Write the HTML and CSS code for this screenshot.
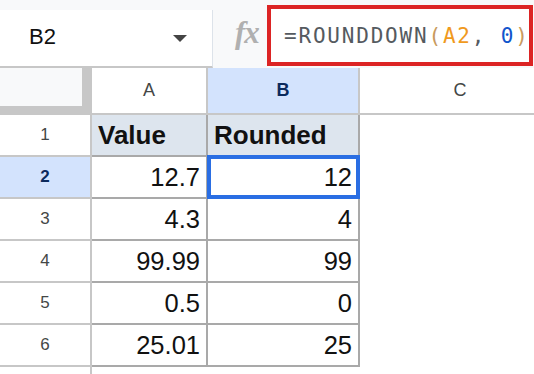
FILE: index.html
```html
<!DOCTYPE html>
<html lang="en">

<head>
    <meta charset="UTF-8">
    <meta name="viewport" content="width=device-width, initial-scale=1.0">
    <title>ROUNDDOWN - Sheet</title>
    <link rel="stylesheet" href="styles.css">
</head>

<body>

    <div class="sheet">
        <div class="toolbar">
            <div class="name-box">
                <span class="cell-ref">B2</span>
                <span class="caret"></span>
            </div>
            <div class="fx">fx</div>
            <div class="formula">
                <span class="fn">=ROUNDDOWN</span><span class="paren">(</span><span class="ref">A2</span><span class="fn">, </span><span class="num">0</span><span class="paren">)</span>
            </div>
        </div>

        <div class="grid">
            <div class="corner"><div class="corner-inner"></div></div>
            <div class="col-head">A</div>
            <div class="col-head active">B</div>
            <div class="col-head last">C</div>

            <div class="row-head">1</div>
            <div class="cell head-cell">Value</div>
            <div class="cell head-cell">Rounded</div>
            <div class="empty"></div>

            <div class="row-head active">2</div>
            <div class="cell num-cell">12.7</div>
            <div class="cell num-cell selected">12</div>
            <div class="empty"></div>

            <div class="row-head">3</div>
            <div class="cell num-cell">4.3</div>
            <div class="cell num-cell">4</div>
            <div class="empty"></div>

            <div class="row-head">4</div>
            <div class="cell num-cell">99.99</div>
            <div class="cell num-cell">99</div>
            <div class="empty"></div>

            <div class="row-head">5</div>
            <div class="cell num-cell">0.5</div>
            <div class="cell num-cell">0</div>
            <div class="empty"></div>

            <div class="row-head">6</div>
            <div class="cell num-cell">25.01</div>
            <div class="cell num-cell">25</div>
            <div class="empty"></div>

            <div class="row-head tail"></div>
            <div class="empty"></div>
            <div class="empty"></div>
            <div class="empty"></div>
        </div>
    </div>

</body>

</html>
```

FILE: styles.css
```css
* {
    margin: 0;
    padding: 0;
    box-sizing: border-box;
    font-family: "Liberation Sans", Arial, sans-serif;
}

body {
    background: #fff;
}

.sheet {
    width: 534px;
    height: 374px;
    overflow: hidden;
}

/* formula bar */

.toolbar {
    display: flex;
    height: 68px;
    background: #f8f9fa;
}

.name-box {
    width: 213px;
    margin-top: 10px;
    height: 58px;
    background: #fff;
    border-bottom: 2px solid #c7c7c7;
    border-right: 1px solid #dde3ea;
    display: flex;
    align-items: center;
    padding: 0 25px 0 29px;
    justify-content: space-between;
}

.cell-ref {
    font-size: 22px;
    color: #111;
    padding-bottom: 2px;
}

.caret {
    width: 0;
    height: 0;
    border-left: 7px solid transparent;
    border-right: 7px solid transparent;
    border-top: 7px solid #444;
}

.fx {
    width: 54px;
    padding: 0 0 2px 22px;
    display: flex;
    align-items: center;
    font-family: "Liberation Serif", serif;
    font-style: italic;
    font-weight: bold;
    font-size: 31px;
    color: #b0b0b0;
    letter-spacing: -1px;
}

.formula {
    margin-top: 5px;
    width: 266px;
    height: 61px;
    background: #fff;
    border: 4px solid #dc2424;
    display: flex;
    align-items: center;
    padding-left: 13px;
    white-space: pre;
}

.formula span {
    font-family: "DejaVu Sans Mono", monospace;
    font-size: 21px;
    letter-spacing: 1.8px;
}

.fn {
    color: #555a60;
}

.paren {
    color: #c99a5e;
}

.ref {
    color: #f09a1e;
}

.num {
    color: #1155cc;
}

/* grid */

.grid {
    display: grid;
    grid-template-columns: 92px 116px 152px 200px;
    grid-template-rows: 47px repeat(6, 42px) 1fr;
    height: 306px;
}

.corner {
    background: #c7c7c7;
}

.corner-inner {
    width: 82px;
    height: 38px;
    background: #f8f9fa;
}

.col-head {
    display: flex;
    align-items: center;
    justify-content: center;
    font-size: 18px;
    color: #444746;
    border-right: 2px solid #c7c7c7;
    border-bottom: 2px solid #c7c7c7;
    background: #fff;
}

.col-head.active {
    background: #d3e3fd;
    color: #0b2a5c;
    font-weight: bold;
}

.col-head.last {
    border-right: none;
}

.row-head {
    display: flex;
    align-items: center;
    justify-content: center;
    font-size: 17px;
    color: #444746;
    border-right: 2px solid #c7c7c7;
    border-bottom: 2px solid #c7c7c7;
}

.row-head.active {
    background: #d3e3fd;
    color: #0b2a5c;
    font-weight: bold;
}

.row-head.tail {
    border-bottom: none;
}

.cell {
    display: flex;
    align-items: center;
    font-size: 25.5px;
    color: #111;
    border-right: 2px solid #a9a9a9;
    border-bottom: 2px solid #a9a9a9;
    position: relative;
}

.head-cell {
    background: #dde5ee;
    font-weight: bold;
    font-size: 26px;
    padding-left: 6px;
}

.num-cell {
    justify-content: flex-end;
    padding-right: 6px;
}

.selected::after {
    content: "";
    position: absolute;
    left: -1px;
    top: -2px;
    right: -2px;
    bottom: -2px;
    border: 4px solid #2a6ee3;
}

.empty {
    background: #fff;
}
```
